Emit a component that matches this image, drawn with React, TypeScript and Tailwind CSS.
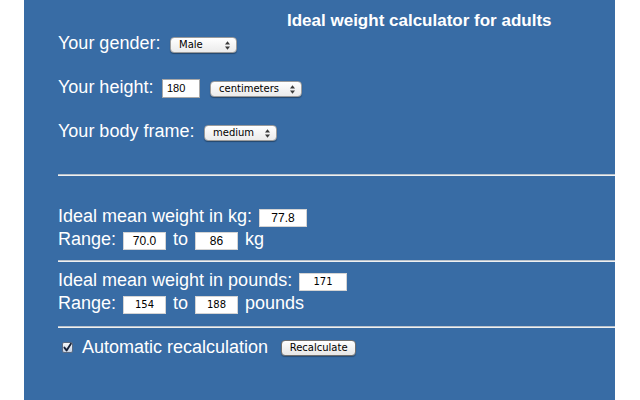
import React from "react";

function Arrows() {
  return (
    <svg width="5" height="9" viewBox="0 0 5 9" className="shrink-0">
      <polygon points="0,3.6 2.5,0.2 5,3.6" fill="#3a3a3a" />
      <polygon points="0,5.4 2.5,8.8 5,5.4" fill="#3a3a3a" />
    </svg>
  );
}

function Select({ label, w }: { label: string; w: string }) {
  return (
    <div
      className={`${w} mt-[6px] h-[16px] shrink-0 flex items-center justify-between pl-[8px] pr-[6px] rounded-[4px] border border-[#9b9b9b] bg-gradient-to-b from-white to-[#ebebeb] shadow-[0_1px_1px_rgba(0,0,0,0.35)] text-[10px] leading-[14px] text-black font-['DejaVu_Sans',sans-serif]`}
    >
      <span>{label}</span>
      <Arrows />
    </div>
  );
}

function Field({
  value,
  w,
  mono,
}: {
  value: string;
  w: string;
  mono?: boolean;
}) {
  return (
    <div
      className={`${w} h-[18px] mt-[4px] shrink-0 bg-white border border-[#d4d4d4] flex items-center justify-center text-black ${
        mono
          ? "text-[10px] font-['DejaVu_Sans',sans-serif]"
          : "text-[12px] font-['Liberation_Sans',Arial,sans-serif]"
      } leading-[16px]`}
    >
      {value}
    </div>
  );
}

function Hr() {
  return (
    <div className="h-[2px] border-t border-t-[#b9c2cc] border-b border-b-[#eef0f2]" />
  );
}

export default function App() {
  return (
    <div className="w-[640px] h-[400px] bg-white font-['Liberation_Sans',Arial,sans-serif]">
      <div className="ml-[24px] w-[591px] h-[400px] bg-[#386ca5] pl-[34px] text-white">
        <div className="h-[31px] pt-[11px] pl-[229px] text-[17px] leading-[20px] font-bold whitespace-nowrap">
          Ideal weight calculator for adults
        </div>

        <div className="flex items-start h-[24px] text-[18px] leading-[24px]">
          <span className="w-[112px] shrink-0">Your gender:</span>
          <Select label="Male" w="w-[67px]" />
        </div>

        <div className="mt-[20px] flex items-start h-[24px] text-[18px] leading-[24px]">
          <span className="w-[104px] shrink-0">Your height:</span>
          <div className="w-[38px] h-[19px] mt-[4px] shrink-0 bg-white border border-[#a8a8a8] pl-[4px] text-[11px] leading-[17px] text-black">
            180
          </div>
          <div className="ml-[10px] flex">
            <Select label="centimeters" w="w-[92px]" />
          </div>
        </div>

        <div className="mt-[20px] flex items-start h-[24px] text-[18px] leading-[24px]">
          <span className="w-[146px] shrink-0">Your body frame:</span>
          <Select label="medium" w="w-[73px]" />
        </div>

        <div className="mt-[31px]">
          <Hr />
        </div>

        <div className="mt-[29px] flex items-start h-[23px] text-[18px] leading-[23px]">
          <span className="w-[201px] shrink-0 whitespace-nowrap">Ideal mean weight in kg:</span>
          <Field value="77.8" w="w-[48px]" />
        </div>
        <div className="flex items-start h-[23px] text-[18px] leading-[23px]">
          <span className="w-[65px] shrink-0">Range:</span>
          <Field value="70.0" w="w-[43px]" />
          <span className="ml-[7px] w-[22px] shrink-0">to</span>
          <Field value="86" w="w-[43px]" />
          <span className="ml-[7px]">kg</span>
        </div>

        <div className="mt-[9px]">
          <Hr />
        </div>

        <div className="mt-[7px] flex items-start h-[23px] text-[18px] leading-[23px]">
          <span className="w-[241px] shrink-0 whitespace-nowrap">Ideal mean weight in pounds:</span>
          <Field value="171" w="w-[48px]" mono />
        </div>
        <div className="flex items-start h-[23px] text-[18px] leading-[23px]">
          <span className="w-[65px] shrink-0">Range:</span>
          <Field value="154" w="w-[43px]" mono />
          <span className="ml-[7px] w-[22px] shrink-0">to</span>
          <Field value="188" w="w-[43px]" mono />
          <span className="ml-[7px]">pounds</span>
        </div>

        <div className="mt-[11px]">
          <Hr />
        </div>

        <div className="mt-[7px] flex items-start h-[24px] text-[18px] leading-[24px]">
          <svg width="11" height="11" viewBox="0 0 11 11" className="ml-[4px] mt-[7px] shrink-0">
            <defs>
              <linearGradient id="cb" x1="0" y1="0" x2="0" y2="1">
                <stop offset="0" stopColor="#f6f8fb" />
                <stop offset="1" stopColor="#c7d3e4" />
              </linearGradient>
            </defs>
            <rect x="0.5" y="0.5" width="10" height="10" rx="1.5" fill="url(#cb)" stroke="#5a6a82" />
            <path d="M2.4 5.6 L4.6 8.4 L8.9 1.8" fill="none" stroke="#16223a" strokeWidth="1.9" strokeLinecap="round" strokeLinejoin="round" />
          </svg>
          <span className="ml-[9px] whitespace-nowrap">Automatic recalculation</span>
          <div className="ml-[13px] mt-[5px] w-[75px] h-[16px] shrink-0 flex items-center justify-center rounded-[4px] border border-[#6f6f6f] bg-gradient-to-b from-white to-[#e6e6e6] shadow-[0_1px_1px_rgba(0,0,0,0.3)] text-[10px] leading-[14px] text-black font-['DejaVu_Sans',sans-serif]">
            Recalculate
          </div>
        </div>
      </div>
    </div>
  );
}
